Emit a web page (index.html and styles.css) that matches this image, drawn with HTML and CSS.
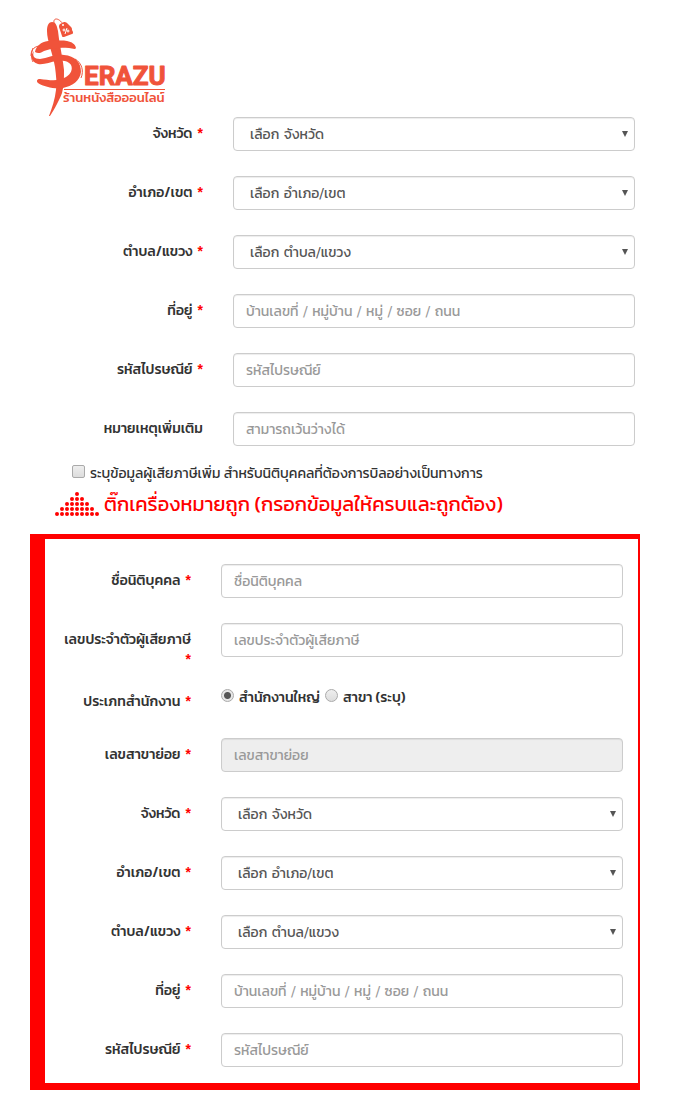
FILE: index.html
```html
<!DOCTYPE html>
<html lang="th">
<head>
    <meta charset="UTF-8">
    <meta name="viewport" content="width=device-width, initial-scale=1.0">
    <title>Serazu ร้านหนังสือออนไลน์</title>
    <link rel="stylesheet" href="styles.css">
</head>
<body>
    <header class="header">
        <svg class="logo" width="140" height="100" viewBox="0 0 140 100" role="img" aria-label="Serazu">
            <!-- pen stroke -->
            <path d="M17 13C17 7 19 4 22 4c4 0 5 4 6 9l1 8c2 12 4 22 5 31 0 8 0 16-2 23-2 6-8 17-12 23l-1 0c3-8 6-17 7-26 1-7 0-15-1-23-2-13-8-26-8-36z"/>
            <!-- upper arm -->
            <path d="M5 34c1-6 6-10 13-11 7 0 13-1 19 0 5 1 8 3 9 7-1 2-4 0-7 0-9-1-18 0-25 3-3 2-6 3-9 1z"/>
            <!-- brush S -->
            <path d="M4 33c-2 5 0 8 6 8 8-1 15-5 24-4 11 1 17 7 17 17-1 9-9 14-18 16-9 1-19-1-25-5-2-2-1-4 2-4 9 1 18 3 26-2 5-3 7-8 5-12-2-4-8-5-14-4-7 1-13 4-19 3-7-2-8-9-4-13z"/>
            <path class="logo-bristle" d="M9 28c-6 1-8 5-8 10M3 30c-2 5-2 10 0 14M45 41c7 4 9 12 6 19"/>
            <!-- price tag -->
            <path d="M30 6l4-2c1 0 2 0 3 1l4 4c1 1 1 2 1 3l1 2c0 1 0 2-1 2l-8 3c-1 0-2 0-2-1l-3-9c0-1 0-2 1-3z"/>
            <path class="logo-string" d="M24 5c-1-5 4-6 9 1"/>
            <circle class="logo-hole" cx="33" cy="7" r="1"/>
            <g class="logo-percent"><circle cx="34" cy="12" r="1"/><circle cx="38" cy="13" r="1"/><path d="M37 10l-2 6"/></g>
            <text class="logo-name" x="54" y="67">ERAZU</text>
            <path d="M34 71h101v1H34z"/>
            <text class="logo-tagline" x="33" y="84">ร้านหนังสือออนไลน์</text>
        </svg>
    </header>

    <form class="form">
        <div class="section">
            <div class="form-group">
                <label class="label" for="province">จังหวัด <span class="required">*</span></label>
                <div class="select"><select class="form-control" id="province"><option>เลือก จังหวัด</option></select></div>
            </div>
            <div class="form-group">
                <label class="label" for="district">อำเภอ/เขต <span class="required">*</span></label>
                <div class="select"><select class="form-control" id="district"><option>เลือก อำเภอ/เขต</option></select></div>
            </div>
            <div class="form-group">
                <label class="label" for="subdistrict">ตำบล/แขวง <span class="required">*</span></label>
                <div class="select"><select class="form-control" id="subdistrict"><option>เลือก ตำบล/แขวง</option></select></div>
            </div>
            <div class="form-group">
                <label class="label" for="address">ที่อยู่ <span class="required">*</span></label>
                <input class="form-control" type="text" id="address" placeholder="บ้านเลขที่ / หมู่บ้าน / หมู่ / ซอย / ถนน">
            </div>
            <div class="form-group">
                <label class="label" for="zipcode">รหัสไปรษณีย์ <span class="required">*</span></label>
                <input class="form-control" type="text" id="zipcode" placeholder="รหัสไปรษณีย์">
            </div>
            <div class="form-group">
                <label class="label" for="note">หมายเหตุเพิ่มเติม</label>
                <input class="form-control" type="text" id="note" placeholder="สามารถเว้นว่างได้">
            </div>
        </div>

        <div class="tax-check">
            <input class="checkbox" type="checkbox" id="tax">
            <label for="tax">ระบุข้อมูลผู้เสียภาษีเพิ่ม สำหรับนิติบุคคลที่ต้องการบิลอย่างเป็นทางการ</label>
        </div>

        <div class="hint">
            <svg class="hint-arrow" width="44" height="25" viewBox="0 0 44 25" aria-hidden="true">
                <path d="M22 2h1M17 7h11M12 12h21M7 17h31M2 22h41"/>
            </svg>
            <span>ติ๊กเครื่องหมายถูก (กรอกข้อมูลให้ครบและถูกต้อง)</span>
        </div>

        <div class="section section-tax">
            <div class="form-group">
                <label class="label" for="company">ชื่อนิติบุคคล <span class="required">*</span></label>
                <input class="form-control" type="text" id="company" placeholder="ชื่อนิติบุคคล">
            </div>
            <div class="form-group">
                <label class="label" for="tax-id">เลขประจำตัวผู้เสียภาษี <span class="required">*</span></label>
                <input class="form-control" type="text" id="tax-id" placeholder="เลขประจำตัวผู้เสียภาษี">
            </div>
            <div class="form-group form-group-radio" role="radiogroup" aria-labelledby="office-label">
                <span class="label" id="office-label">ประเภทสำนักงาน <span class="required">*</span></span>
                <div class="radios">
                    <input class="radio" type="radio" name="office" id="head-office" checked>
                    <label for="head-office">สำนักงานใหญ่</label>
                    <input class="radio" type="radio" name="office" id="branch">
                    <label for="branch">สาขา (ระบุ)</label>
                </div>
            </div>
            <div class="form-group">
                <label class="label" for="branch-no">เลขสาขาย่อย <span class="required">*</span></label>
                <input class="form-control" type="text" id="branch-no" placeholder="เลขสาขาย่อย" disabled>
            </div>
            <div class="form-group">
                <label class="label" for="tax-province">จังหวัด <span class="required">*</span></label>
                <div class="select"><select class="form-control" id="tax-province"><option>เลือก จังหวัด</option></select></div>
            </div>
            <div class="form-group">
                <label class="label" for="tax-district">อำเภอ/เขต <span class="required">*</span></label>
                <div class="select"><select class="form-control" id="tax-district"><option>เลือก อำเภอ/เขต</option></select></div>
            </div>
            <div class="form-group">
                <label class="label" for="tax-subdistrict">ตำบล/แขวง <span class="required">*</span></label>
                <div class="select"><select class="form-control" id="tax-subdistrict"><option>เลือก ตำบล/แขวง</option></select></div>
            </div>
            <div class="form-group">
                <label class="label" for="tax-address">ที่อยู่ <span class="required">*</span></label>
                <input class="form-control" type="text" id="tax-address" placeholder="บ้านเลขที่ / หมู่บ้าน / หมู่ / ซอย / ถนน">
            </div>
            <div class="form-group">
                <label class="label" for="tax-zipcode">รหัสไปรษณีย์ <span class="required">*</span></label>
                <input class="form-control" type="text" id="tax-zipcode" placeholder="รหัสไปรษณีย์">
            </div>
        </div>
    </form>
</body>
</html>
```
FILE: styles.css
```css
* {
    box-sizing: border-box;
}
body {
    margin: 0;
    background-color: #fff;
    color: #333;
    font-family: Kanit, "Noto Sans", sans-serif;
    font-size: 14px;
    line-height: 20px;
}
.header {
    height: 117px;
    padding: 18px 30px 0;
}
.logo {
    display: block;
    overflow: visible;
    fill: #f0533a;
}
.logo-bristle, .logo-string {
    fill: none;
    stroke: #f0533a;
    stroke-width: 1;
}
.logo-hole {
    fill: #fff;
}
.logo-percent {
    fill: none;
    stroke: #fff;
    stroke-width: 1;
}
.logo-name {
    font-family: Roboto, sans-serif;
    font-size: 26px;
    font-weight: bold;
    stroke: #f0533a;
    stroke-width: 1;
    stroke-linejoin: round;
}
.logo-tagline {
    font-size: 13px;
    font-weight: 500;
}
.section {
    padding: 0 42px 0 30px;
}
.form-group {
    display: grid;
    grid-template-columns: 173px 1fr;
    column-gap: 30px;
    align-items: start;
    min-height: 44px;
    margin-bottom: 15px;
}
.form-group:last-child {
    margin-bottom: 0;
}
.label {
    padding-top: 7px;
    font-weight: 500;
    text-align: right;
}
.required {
    margin-left: 2px;
    color: #f00;
    font-family: "Liberation Sans", Arial, sans-serif;
    font-weight: bold;
    line-height: 14px;
}
.form-control {
    display: block;
    width: 100%;
    height: 34px;
    padding: 6px 12px;
    border: 1px solid #ccc;
    border-radius: 4px;
    background-color: #fff;
    box-shadow: inset 0 1px 1px rgba(0, 0, 0, 0.075);
    color: #555;
    font-family: "DejaVu Sans", Kanit, sans-serif;
    font-size: 14px;
    line-height: 20px;
}
.form-control::placeholder {
    color: #999;
    opacity: 1;
}
.form-control:disabled {
    background-color: #eee;
}
.select {
    position: relative;
}
.select .form-control {
    appearance: none;
    padding: 6px 16px;
}
.select::after {
    content: "";
    position: absolute;
    top: 14px;
    right: 7px;
    border: 3px solid transparent;
    border-top: 6px solid #555;
    border-bottom: 0;
    pointer-events: none;
}
.tax-check {
    display: flex;
    gap: 5px;
    margin-top: 8px;
    padding-left: 72px;
}
.checkbox, .radio {
    appearance: none;
    flex: none;
    width: 13px;
    height: 13px;
    margin: 1px 0 0;
    border: 1px solid #aaa;
    border-radius: 2px;
    background: linear-gradient(#eee, #ddd);
}
.radio {
    border-radius: 50%;
}
.radio:checked {
    background: radial-gradient(circle, #555 0, #555 3px, #e6e6e6 4px);
}
.hint {
    display: flex;
    align-items: center;
    gap: 5px;
    margin: 4px 0 14px;
    padding-left: 55px;
    color: #f00;
    font-size: 20px;
    line-height: 32px;
}
.hint-arrow {
    fill: none;
    stroke: #f00;
    stroke-width: 4;
    stroke-linecap: round;
    stroke-dasharray: 0 5;
}
.section-tax {
    margin: 0 37px 11px 30px;
    padding: 25px 15px 6px 15px;
    border: solid #f00;
    border-width: 5px 2px 7px 15px;
}
.section-tax .form-group {
    grid-template-columns: 131px 1fr;
}
.section-tax .form-group-radio {
    min-height: 38px;
}
.radios {
    display: flex;
    gap: 5px;
    padding-top: 3px;
    font-weight: 500;
}
```
